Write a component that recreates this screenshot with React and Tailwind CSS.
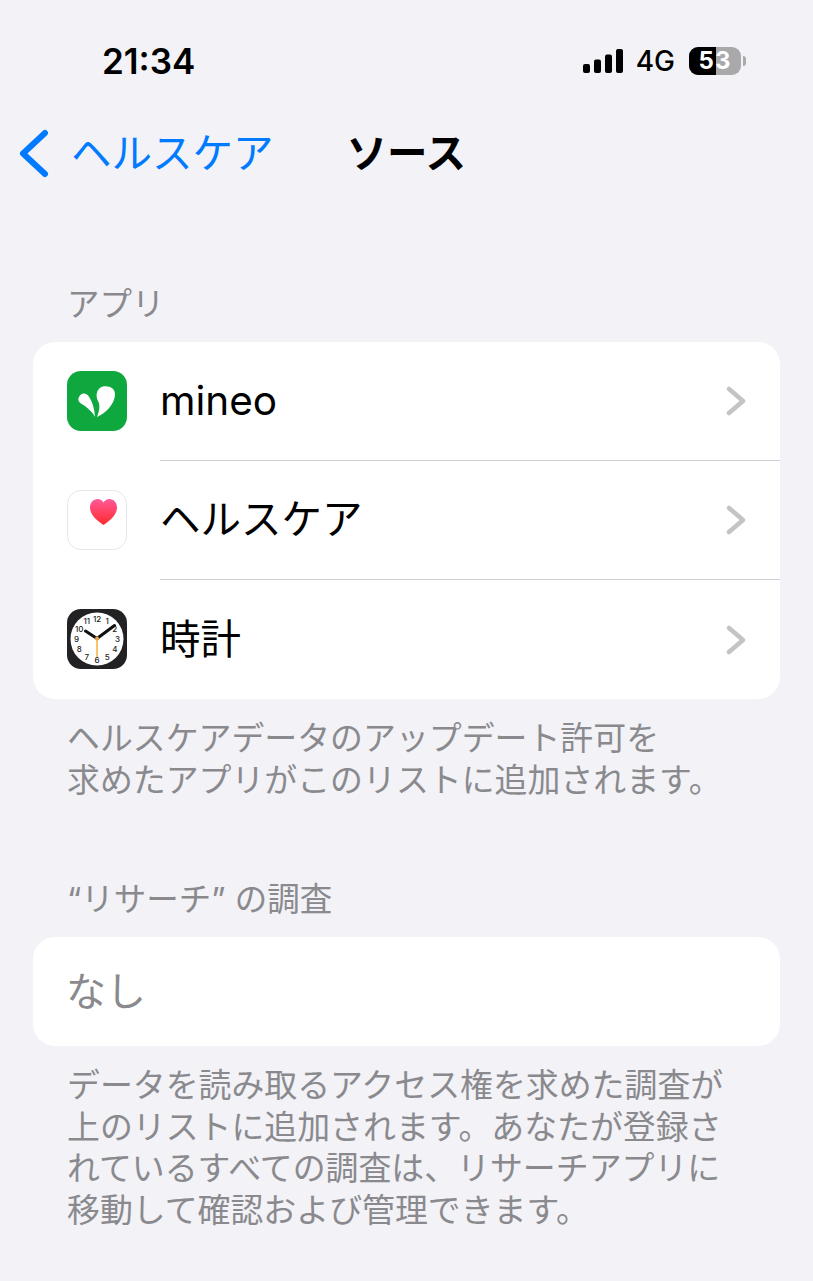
import React from "react";

const font = { fontFamily: '"Inter","Noto Sans CJK JP",sans-serif' };

function Chevron() {
  return (
    <svg width="22" height="30" viewBox="0 0 22 30" fill="none" className="shrink-0">
      <path d="M4 3 L18 15 L4 27" stroke="#c4c4c7" strokeWidth="4.5" strokeLinecap="round" strokeLinejoin="round" />
    </svg>
  );
}

function MineoIcon() {
  return (
    <div className="w-[60px] h-[60px] rounded-[14px] bg-[#0fa83f] flex items-center justify-center">
      <svg width="60" height="60" viewBox="0 0 60 60" className="shrink-0">
        <path d="M30 46 C33 38 33 34 31 30 C28 24 30 17 36 15.5 C43 14.5 48.5 18 48 24 C47.5 33 39 42 30 46 Z" fill="#fff" />
        <path d="M28 46 C27.5 38 26 32 21.5 25 C19.5 22 15.5 21.5 13 24.5 C10.5 27.5 11 30.5 14 32.5 C19 35.5 25 40 28 46 Z" fill="#fff" />
      </svg>
    </div>
  );
}

function HealthIcon() {
  return (
    <div className="w-[60px] h-[60px] rounded-[14px] bg-white border border-[#e6e6e8] flex items-center justify-center">
      <svg width="60" height="60" viewBox="0 0 60 60" className="shrink-0">
        <defs>
          <linearGradient id="hg" x1="0" y1="0" x2="0" y2="1">
            <stop offset="0" stopColor="#ff5a9a" />
            <stop offset="1" stopColor="#ff2a2a" />
          </linearGradient>
        </defs>
        <path d="M36.5 35 C31 31 23 25.5 23 17.5 C23 12.5 26.5 9 30.5 9 C33 9 35.3 10.2 36.5 12.5 C37.7 10.2 40 9 42.5 9 C46.5 9 50 12.5 50 17.5 C50 25.5 42 31 36.5 35 Z" fill="url(#hg)" />
      </svg>
    </div>
  );
}

function ClockIcon() {
  const nums = [12, 1, 2, 3, 4, 5, 6, 7, 8, 9, 10, 11];
  return (
    <div className="w-[60px] h-[60px] rounded-[14px] bg-[#222224] flex items-center justify-center">
      <svg width="60" height="60" viewBox="0 0 60 60" className="shrink-0">
        <circle cx="30" cy="30" r="26.5" fill="#fff" />
        {nums.map((n, i) => {
          const a = (i * Math.PI) / 6;
          return (
            <text key={n} x={30 + 20.5 * Math.sin(a)} y={30 - 20.5 * Math.cos(a) + 3} textAnchor="middle" fontSize="8" fontWeight="500" fill="#222" fontFamily="Inter,sans-serif">
              {n}
            </text>
          );
        })}
        <path d="M30 29.5 L18.5 22" stroke="#111" strokeWidth="3" strokeLinecap="round" />
        <path d="M30 29.5 L47.5 16.5" stroke="#111" strokeWidth="3" strokeLinecap="round" />
        <path d="M30 29.5 L30 48" stroke="#f5a623" strokeWidth="1.3" />
        <circle cx="30" cy="29.5" r="2" fill="#e8a33a" />
      </svg>
    </div>
  );
}

function Row({ icon, label, last }) {
  return (
    <div className="flex h-[119px] items-stretch pl-[34px]">
      <div className="w-[60px] shrink-0 flex items-center pb-[2px]">{icon}</div>
      <div className={`ml-[33px] flex-1 flex items-center justify-between pr-[33px] ${last ? "" : "border-b border-[#cfcfd2]"}`}>
        <span className="text-[40.5px] leading-[50px] text-black">{label}</span>
        <Chevron />
      </div>
    </div>
  );
}

export default function App() {
  return (
    <div className="w-[813px] h-[1281px] bg-[#f2f2f7] overflow-hidden" style={font}>
      <div className="h-[120px] flex items-center justify-between pt-[2px] pl-[102px] pr-[67px]">
        <span className="text-[35px] font-semibold text-black leading-none">21:34</span>
        <div className="flex items-center">
          <svg width="40" height="26" viewBox="0 0 40 26" className="shrink-0">
            <rect x="0" y="16" width="7" height="9" rx="2" fill="#000" />
            <rect x="11" y="11.5" width="7" height="13.5" rx="2" fill="#000" />
            <rect x="22" y="6.5" width="7" height="18.5" rx="2" fill="#000" />
            <rect x="33" y="1" width="7" height="24" rx="2" fill="#000" />
          </svg>
          <span className="ml-[13px] text-[28px] leading-none font-medium text-black">4G</span>
          <div className="ml-[14px] relative w-[52px] h-[28px] rounded-[9px] bg-[#a9a9ac] overflow-hidden flex items-center justify-center">
            <div className="absolute left-0 top-0 bottom-0 w-[27px] bg-black" />
            <span className="relative text-[24px] leading-none font-bold text-white tracking-[1px]">53</span>
          </div>
          <div className="ml-[2px] w-[3px] h-[10px] rounded-r-full bg-[#a9a9ac]" />
        </div>
      </div>
      <div className="h-[68px] flex items-center pl-[19px]">
        <svg width="30" height="50" viewBox="0 0 30 50" className="shrink-0">
          <path d="M26 4 L4 24.5 L26 45" fill="none" stroke="#007aff" strokeWidth="6" strokeLinecap="round" strokeLinejoin="round" />
        </svg>
        <span className="ml-[22px] text-[40.5px] leading-[50px] text-[#007aff]">ヘルスケア</span>
        <span className="ml-[73px] text-[40.5px] leading-[50px] font-semibold text-black">ソース</span>
      </div>
      <div className="pt-[97px] pl-[67px] text-[32.5px] leading-[40px] text-[#8a8a8e]">アプリ</div>
      <div className="mt-[17px] mx-[33px] w-[747px] bg-white rounded-[22px] overflow-hidden">
        <Row icon={<MineoIcon />} label="mineo" />
        <Row icon={<HealthIcon />} label="ヘルスケア" />
        <Row icon={<ClockIcon />} label="時計" last />
      </div>
      <p className="mt-[19px] ml-[67px] text-[32.9px] leading-[41.5px] text-[#8a8a8e] whitespace-nowrap">
        ヘルスケアデータのアップデート許可を
        <br />
        求めたアプリがこのリストに追加されます。
      </p>
      <div className="mt-[79px] ml-[67px] text-[32.5px] leading-[40px] text-[#8a8a8e]">“リサーチ” の調査</div>
      <div className="mt-[17px] mx-[33px] w-[747px] h-[109px] bg-white rounded-[22px] flex items-center pl-[33px] text-[40px] text-[#8a8a8e]">
        なし
      </div>
      <p className="mt-[19px] ml-[67px] text-[32.9px] leading-[41.5px] text-[#8a8a8e] whitespace-nowrap">
        データを読み取るアクセス権を求めた調査が
        <br />
        上のリストに追加されます。あなたが登録さ
        <br />
        れているすべての調査は、リサーチアプリに
        <br />
        移動して確認および管理できます。
      </p>
    </div>
  );
}
